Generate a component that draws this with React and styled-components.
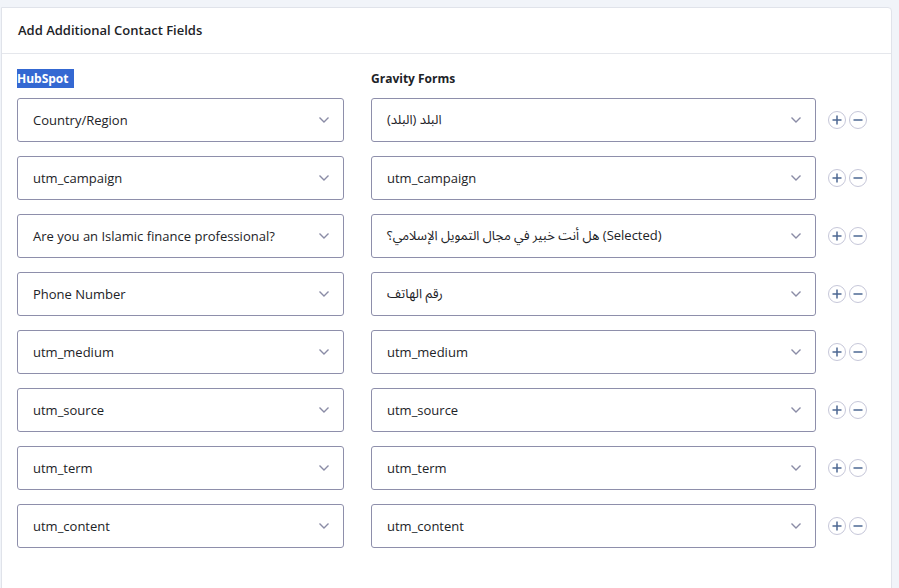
import React from "react";
import styled, { createGlobalStyle } from "styled-components";

const Global = createGlobalStyle`
  html, body { margin: 0; padding: 0; background: #f1f4f9; }
  body { font-family: "Open Sans", "Noto Sans", "Noto Sans Arabic", "DejaVu Sans", sans-serif; color: #1d2327; }
  * { box-sizing: border-box; }
`;

const Page = styled.div`
  padding: 7px 7px 0 1px;
  height: 588px;
  overflow: hidden;
`;

const Card = styled.section`
  background: #fff;
  border: 1px solid #e0e3ea;
  border-radius: 0 4px 0 0;
  height: 700px;
`;

const Header = styled.header`
  height: 46px;
  display: flex;
  align-items: center;
  padding: 0 16px 2px;
  border-bottom: 1px solid #e5e7ec;
`;

const Title = styled.h2`
  margin: 0;
  font-size: 13px;
  font-weight: 600;
  color: #1d2327;
`;

const Body = styled.div`
  padding: 15px 15px 0 15px;
`;

const Grid = styled.div`
  display: grid;
  grid-template-columns: 327px 445px auto;
  column-gap: 27px;
  row-gap: 14px;
  align-items: center;
`;

const Label = styled.div`
  font-size: 12px;
  font-weight: 700;
  line-height: 19px;
  margin-bottom: -4px;
`;

const Selected = styled.span`
  display: inline-block;
  background: #3468d2;
  color: #fff;
  padding-right: 5px;
  line-height: 19px;
`;

const SelectBox = styled.div`
  height: 44px;
  border: 1px solid #8e8fab;
  border-radius: 3px;
  display: flex;
  align-items: center;
  justify-content: space-between;
  padding: 0 13px 0 15px;
  font-size: 13px;
  color: #1d2327;
  background: #fff;
  white-space: nowrap;
`;

const Actions = styled.div`
  display: flex;
  gap: 3px;
  margin-left: -15px;
`;

const RoundButton = styled.button`
  width: 18px;
  height: 18px;
  padding: 0;
  border: 1px solid #c6c7d9;
  border-radius: 50%;
  background: #fff;
  display: flex;
  align-items: center;
  justify-content: center;
  cursor: pointer;
`;

const Chevron = () => (
  <svg width="12" height="8" viewBox="0 0 12 8" fill="none">
    <path d="M1.5 1.5 L6 6 L10.5 1.5" stroke="#8a8ca6" strokeWidth="1.4" />
  </svg>
);

const Plus = () => (
  <svg width="12" height="12" viewBox="0 0 12 12">
    <path d="M6 1.5 V10.5 M1.5 6 H10.5" stroke="#4d6893" strokeWidth="1.5" />
  </svg>
);

const Minus = () => (
  <svg width="12" height="12" viewBox="0 0 12 12">
    <path d="M1.5 6 H10.5" stroke="#4d6893" strokeWidth="1.5" />
  </svg>
);

const rows = [
  ["Country/Region", "البلد (البلد)"],
  ["utm_campaign", "utm_campaign"],
  ["Are you an Islamic finance professional?", "هل أنت خبير في مجال التمويل الإسلامي؟ (Selected)"],
  ["Phone Number", "رقم الهاتف"],
  ["utm_medium", "utm_medium"],
  ["utm_source", "utm_source"],
  ["utm_term", "utm_term"],
  ["utm_content", "utm_content"],
];

export default function App() {
  return (
    <>
      <Global />
      <Page>
        <Card>
          <Header>
            <Title>Add Additional Contact Fields</Title>
          </Header>
          <Body>
            <Grid>
              <Label><Selected>HubSpot</Selected></Label>
              <Label>Gravity Forms</Label>
              <div />
              {rows.map(([a, b], i) => (
                <React.Fragment key={i}>
                  <SelectBox>
                    <span>{a}</span>
                    <Chevron />
                  </SelectBox>
                  <SelectBox>
                    <span>{b}</span>
                    <Chevron />
                  </SelectBox>
                  <Actions>
                    <RoundButton aria-label="add"><Plus /></RoundButton>
                    <RoundButton aria-label="remove"><Minus /></RoundButton>
                  </Actions>
                </React.Fragment>
              ))}
            </Grid>
          </Body>
        </Card>
      </Page>
    </>
  );
}
